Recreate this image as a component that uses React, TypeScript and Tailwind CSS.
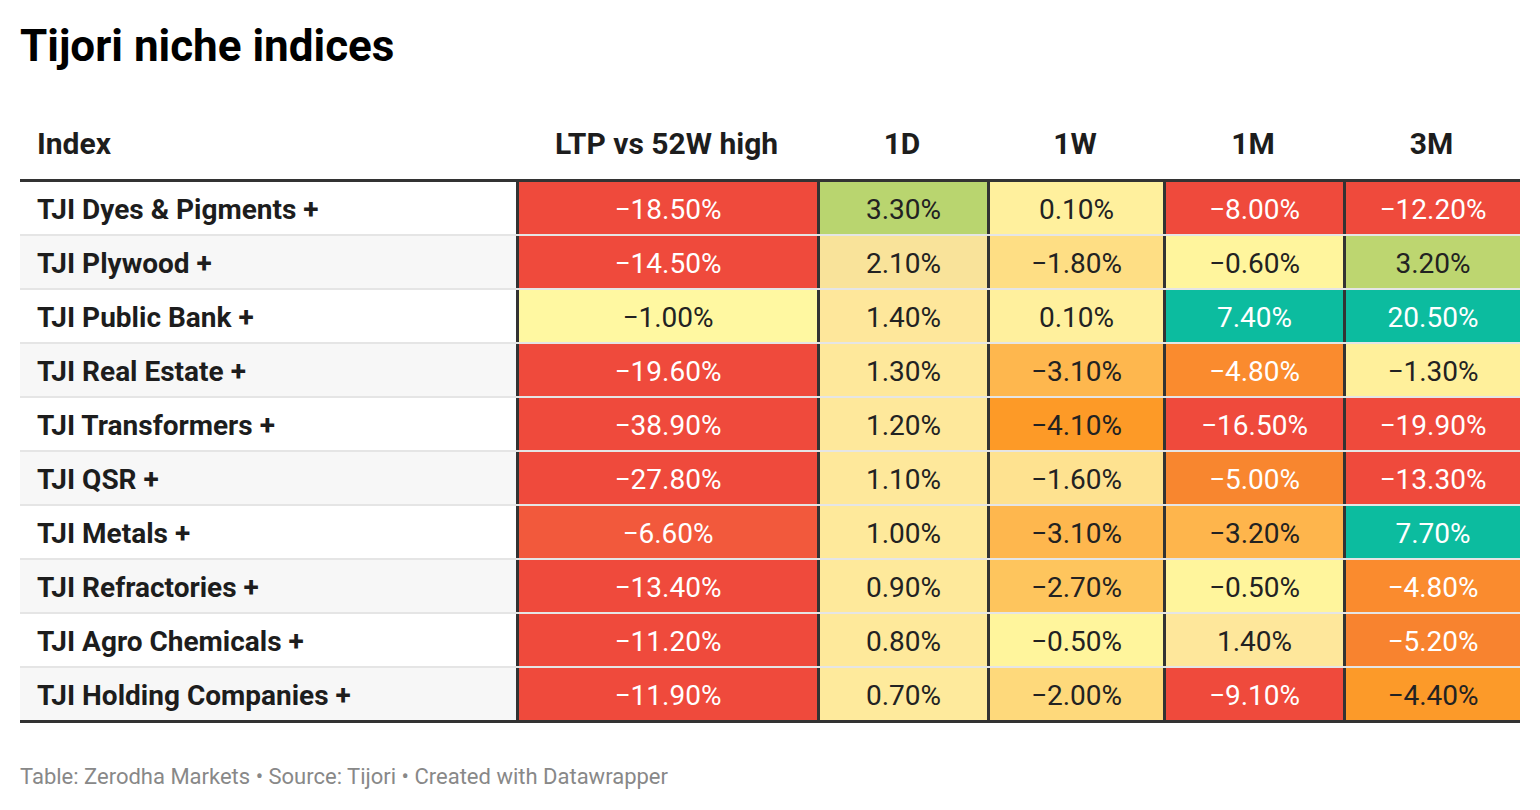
import React from "react";

type Cell = { v: string; bg: string; light?: boolean };

type Row = { name: string; cells: Cell[] };

const RED = "bg-[#ef4a3c]";
const TEAL = "bg-[#0cbc9f]";

const ROWS: Row[] = [
  {
    name: "TJI Dyes & Pigments +",
    cells: [
      { v: "−18.50%", bg: RED, light: true },
      { v: "3.30%", bg: "bg-[#b9d56f]" },
      { v: "0.10%", bg: "bg-[#fff09d]" },
      { v: "−8.00%", bg: RED, light: true },
      { v: "−12.20%", bg: RED, light: true },
    ],
  },
  {
    name: "TJI Plywood +",
    cells: [
      { v: "−14.50%", bg: RED, light: true },
      { v: "2.10%", bg: "bg-[#f9e39a]" },
      { v: "−1.80%", bg: "bg-[#fede84]" },
      { v: "−0.60%", bg: "bg-[#fff59d]" },
      { v: "3.20%", bg: "bg-[#bdd670]" },
    ],
  },
  {
    name: "TJI Public Bank +",
    cells: [
      { v: "−1.00%", bg: "bg-[#fff8a1]" },
      { v: "1.40%", bg: "bg-[#fee79b]" },
      { v: "0.10%", bg: "bg-[#fff09d]" },
      { v: "7.40%", bg: TEAL, light: true },
      { v: "20.50%", bg: TEAL, light: true },
    ],
  },
  {
    name: "TJI Real Estate +",
    cells: [
      { v: "−19.60%", bg: RED, light: true },
      { v: "1.30%", bg: "bg-[#fee89b]" },
      { v: "−3.10%", bg: "bg-[#feb74e]" },
      { v: "−4.80%", bg: "bg-[#fa8b2e]", light: true },
      { v: "−1.30%", bg: "bg-[#fff09b]" },
    ],
  },
  {
    name: "TJI Transformers +",
    cells: [
      { v: "−38.90%", bg: RED, light: true },
      { v: "1.20%", bg: "bg-[#fee89b]" },
      { v: "−4.10%", bg: "bg-[#fd9a27]" },
      { v: "−16.50%", bg: RED, light: true },
      { v: "−19.90%", bg: RED, light: true },
    ],
  },
  {
    name: "TJI QSR +",
    cells: [
      { v: "−27.80%", bg: RED, light: true },
      { v: "1.10%", bg: "bg-[#fee89b]" },
      { v: "−1.60%", bg: "bg-[#fee290]" },
      { v: "−5.00%", bg: "bg-[#f8862f]", light: true },
      { v: "−13.30%", bg: RED, light: true },
    ],
  },
  {
    name: "TJI Metals +",
    cells: [
      { v: "−6.60%", bg: "bg-[#f2593c]", light: true },
      { v: "1.00%", bg: "bg-[#fee99b]" },
      { v: "−3.10%", bg: "bg-[#feb74e]" },
      { v: "−3.20%", bg: "bg-[#feb54c]" },
      { v: "7.70%", bg: TEAL, light: true },
    ],
  },
  {
    name: "TJI Refractories +",
    cells: [
      { v: "−13.40%", bg: RED, light: true },
      { v: "0.90%", bg: "bg-[#fee99b]" },
      { v: "−2.70%", bg: "bg-[#fec55d]" },
      { v: "−0.50%", bg: "bg-[#fff59c]" },
      { v: "−4.80%", bg: "bg-[#fa8b2e]", light: true },
    ],
  },
  {
    name: "TJI Agro Chemicals +",
    cells: [
      { v: "−11.20%", bg: RED, light: true },
      { v: "0.80%", bg: "bg-[#fee99b]" },
      { v: "−0.50%", bg: "bg-[#fff59c]" },
      { v: "1.40%", bg: "bg-[#fee79b]" },
      { v: "−5.20%", bg: "bg-[#f8832f]", light: true },
    ],
  },
  {
    name: "TJI Holding Companies +",
    cells: [
      { v: "−11.90%", bg: RED, light: true },
      { v: "0.70%", bg: "bg-[#feea9c]" },
      { v: "−2.00%", bg: "bg-[#fed97b]" },
      { v: "−9.10%", bg: RED, light: true },
      { v: "−4.40%", bg: "bg-[#fc9a29]" },
    ],
  },
];

const HEADS = ["LTP vs 52W high", "1D", "1W", "1M", "3M"];

const GRID = "grid grid-cols-[496px_301px_170px_176px_180px_177px]";

export default function App() {
  return (
    <div className="min-h-[810px] bg-white px-5 pt-5 font-['Roboto',sans-serif] text-[#1d1d1d]">
      {/* Title */}
      <h1 className="text-[44px] font-bold leading-[52px] text-black">Tijori niche indices</h1>

      {/* Table */}
      <div className="w-[1500px]">
        <div className={`${GRID} h-[110px] items-end border-b-[3px] border-[#333]`}>
          <div className="pb-[20px] pl-[17px] text-[30px] font-bold leading-[30px]">Index</div>
          {HEADS.map((h) => (
            <div key={h} className="pb-[20px] text-center text-[30px] font-bold leading-[30px]">
              {h}
            </div>
          ))}
        </div>

        {ROWS.map((row, i) => {
          const last = i === ROWS.length - 1;
          return (
            <div
              key={row.name}
              className={`${GRID} ${
                last ? "h-[55px] border-b-[3px] border-[#333]" : "h-[54px] border-b-2 border-black/10"
              }`}
            >
              <div
                className={`flex items-center pl-[17px] pt-[3px] text-[28px] font-bold ${
                  i % 2 === 1 ? "bg-[#f7f7f7]" : "bg-white"
                }`}
              >
                {row.name}
              </div>
              {row.cells.map((c, j) => (
                <div
                  key={j}
                  className={`flex items-center justify-center border-l-[3px] border-[#333] pt-[3px] text-[28px] ${c.bg} ${
                    c.light ? "text-white" : "text-[#222]"
                  }`}
                >
                  {c.v}
                </div>
              ))}
            </div>
          );
        })}
      </div>

      {/* Footer */}
      <p className="mt-[42px] text-[22px] leading-[24px] text-[#888]">
        Table: Zerodha Markets • Source: Tijori • Created with Datawrapper
      </p>
    </div>
  );
}
